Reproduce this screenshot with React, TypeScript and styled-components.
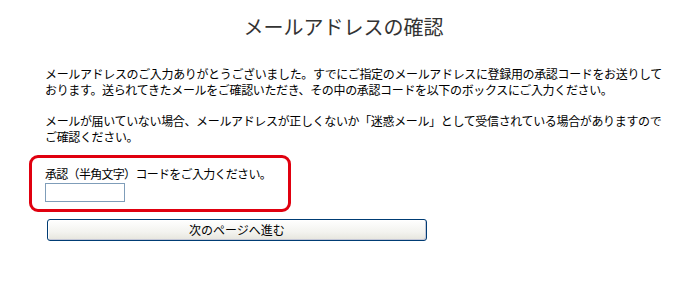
import { createGlobalStyle } from 'styled-components';
import styled from 'styled-components';

const GlobalStyle = createGlobalStyle`
    body {
        margin: 0;
        background: #fff;
        font-family: "Noto Sans CJK JP", "Liberation Sans", sans-serif;
        color: #000;
    }
`;

const Page = styled.div`
    width: 687px;
    padding: 12px 0 0;
    box-sizing: border-box;
`;

const Title = styled.h1`
    margin: 0 0 24px;
    text-align: center;
    font-size: 20px;
    line-height: 30px;
    font-weight: 400;
    color: #333;
`;

const Main = styled.div`
    padding: 0 29px;
`;

const P = styled.p`
    margin: 0 0 15px 16px;
    font-size: 12px;
    line-height: 16px;
    letter-spacing: -0.35px;
    white-space: nowrap;
`;

const CodeBox = styled.div`
    width: 262px;
    box-sizing: border-box;
    margin-top: -5px;
    padding: 8px 13px 7px;
    border: 3px solid #e0000f;
    border-radius: 9px;
`;

const Label = styled.label`
    display: block;
    font-size: 12px;
    line-height: 16px;
    letter-spacing: -0.7px;
    white-space: nowrap;
`;

const CodeInput = styled.input`
    display: block;
    width: 80px;
    height: 19px;
    margin-top: 1px;
    padding: 0 2px;
    box-sizing: border-box;
    border: 1px solid #7f9db9;
    font-size: 12px;
    outline: none;
`;

const NextButton = styled.button`
    display: block;
    width: 380px;
    height: 22px;
    margin: 7px 0 0 18px;
    padding: 0;
    border: 1px solid #003c74;
    border-radius: 3px;
    background: linear-gradient(#ffffff, #f3f3ef 60%, #e6e5dd);
    box-shadow: inset -1px -1px 0 #c4c7d6, inset 1px 1px 0 #fff;
    font-family: "Noto Sans CJK JP", sans-serif;
    font-size: 12px;
    line-height: 18px;
    color: #000;
    cursor: pointer;
`;

const App = () => {
    return <>
        <GlobalStyle />
        <Page>
            <Title>メールアドレスの確認</Title>
            <Main>
                <P>メールアドレスのご入力ありがとうございました。すでにご指定のメールアドレスに登録用の承認コードをお送りして<br />おります。送られてきたメールをご確認いただき、その中の承認コードを以下のボックスにご入力ください。</P>
                <P>メールが届いていない場合、メールアドレスが正しくないか「迷惑メール」として受信されている場合がありますので<br />ご確認ください。</P>
                <CodeBox>
                    <Label htmlFor="code">承認（半角文字）コードをご入力ください。</Label>
                    <CodeInput id="code" type="text" />
                </CodeBox>
                <NextButton type="button">次のページへ進む</NextButton>
            </Main>
        </Page>
    </>;
};

export default App;
